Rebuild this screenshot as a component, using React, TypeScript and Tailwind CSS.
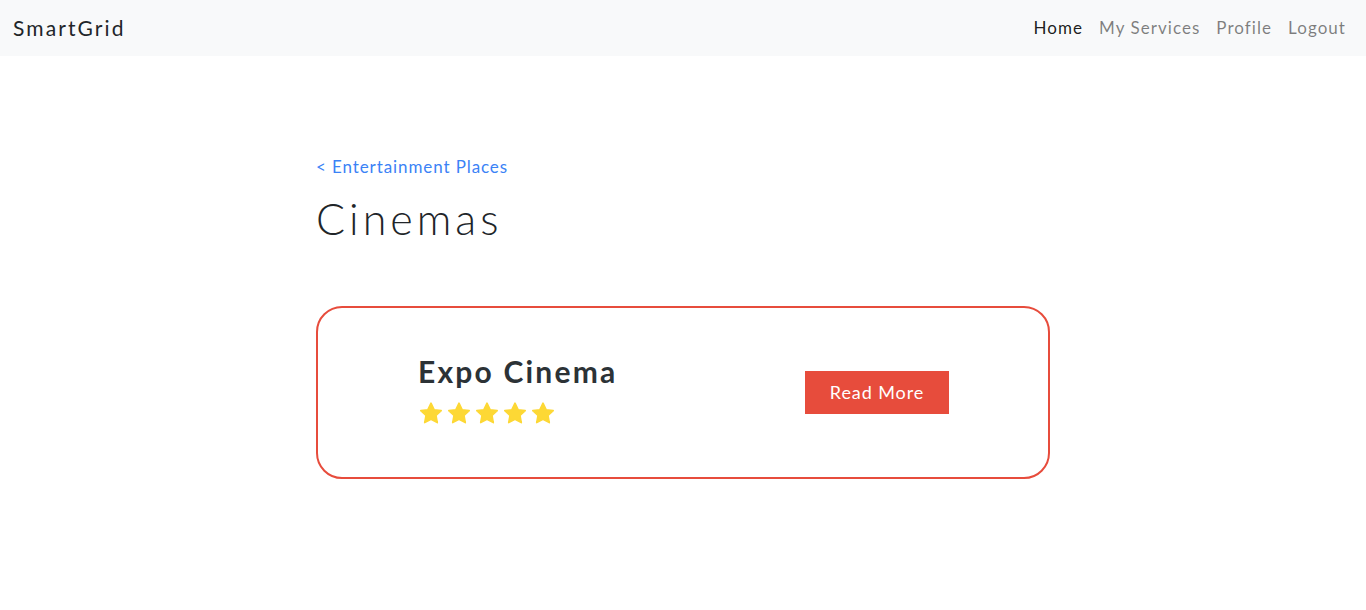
import React from "react";

const Star = () => (
  <svg width="24" height="23" viewBox="0 0 24 23" className="block">
    <path
      d="M12 1.2l3.1 6.5 7.1.9-5.2 4.9 1.3 7.1L12 17.2l-6.3 3.4 1.3-7.1-5.2-4.9 7.1-.9z"
      fill="#fdd835"
      stroke="#fdd835"
      strokeWidth="1.6"
      strokeLinejoin="round"
    />
  </svg>
);

export default function App() {
  const font = { fontFamily: "Lato, 'Open Sans', sans-serif" };
  return (
    <div className="min-h-[610px] bg-white" style={font}>
      <nav className="h-14 bg-[#f8f9fa] flex items-center justify-between pl-[13px] pr-[20px]">
        <span className="text-[21px] text-[#212529] tracking-[2.1px]">SmartGrid</span>
        <div className="flex items-center gap-[16px] text-[17px] tracking-[1.05px]">
          <span className="text-[rgba(0,0,0,0.9)]">Home</span>
          <span className="text-[rgba(0,0,0,0.5)]">My Services</span>
          <span className="text-[rgba(0,0,0,0.5)]">Profile</span>
          <span className="text-[rgba(0,0,0,0.5)]">Logout</span>
        </div>
      </nav>
      <main className="w-[734px] ml-[316px] pt-[98px]">
        <a className="text-[17px] text-[#3b82f6] tracking-[0.9px] leading-[26px] block">&lt; Entertainment Places</a>
        <h1 className="text-[43px] font-light text-[#212529] leading-[52px] mt-[13px] tracking-[4px]">Cinemas</h1>
        <div className="mt-[61px] h-[173px] border-2 border-[#e74c3c] rounded-[26px] flex items-start justify-between pl-[100px] pr-[99px]">
          <div className="flex flex-col pt-[45px]">
            <h2 className="text-[30px] font-bold text-[#2c3236] leading-[36px] tracking-[2.2px]">Expo Cinema</h2>
            <div className="flex gap-[4px] mt-[13px] ml-[1px]">
              <Star />
              <Star />
              <Star />
              <Star />
              <Star />
            </div>
          </div>
          <button className="mt-[63px] w-[144px] h-[43px] bg-[#e74c3c] text-white text-[18px] tracking-[0.9px] flex items-center justify-center">
            Read More
          </button>
        </div>
      </main>
    </div>
  );
}
